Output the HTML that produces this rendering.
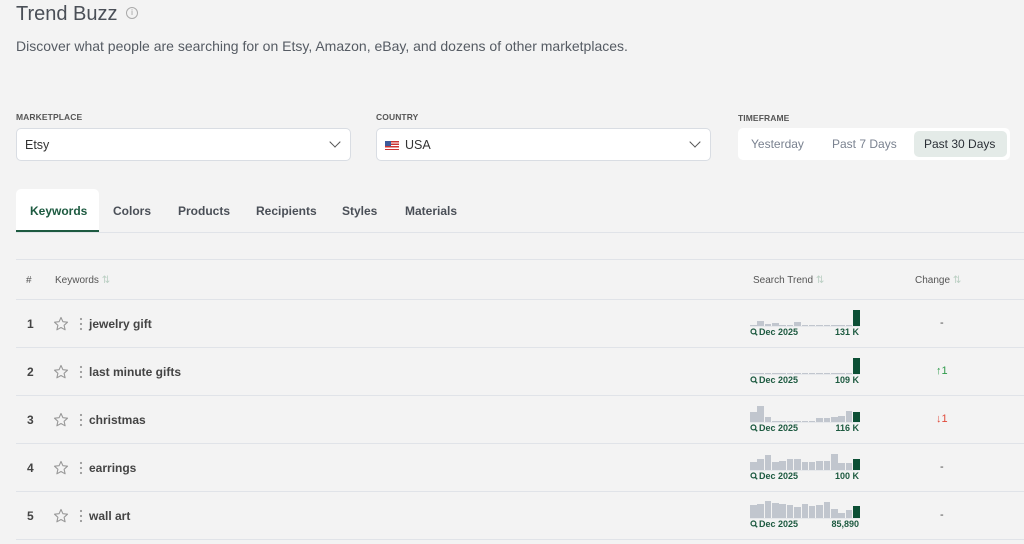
<!DOCTYPE html>
<html><head><style>
*{box-sizing:border-box;margin:0;padding:0}
body{width:1024px;height:544px;overflow:hidden;background:#f3f3f3;font-family:"Liberation Sans",sans-serif;color:#3a3f47;position:relative}
.abs{position:absolute}
h1{position:absolute;left:16px;top:3px;font-size:20px;font-weight:400;color:#4a4f57}
.info{position:absolute;left:126px;top:7px;width:12px;height:12px;border:1px solid #aaa;border-radius:50%;font-size:8px;color:#999;text-align:center;line-height:10px}
.sub{left:16px;top:38px;font-size:14px;color:#555b63}
.lbl{font-size:8.5px;font-weight:700;color:#555;letter-spacing:.1px}
.sel{background:#fff;border:1px solid #d9dde3;border-radius:5px;height:33px;top:128px;font-size:12.5px;padding:9px 8px;color:#333}
.chev{position:absolute;right:11px;width:8px;height:8px;border-right:1.5px solid #555;border-bottom:1.5px solid #555;transform:rotate(45deg);top:9px}
.tf{left:738px;top:128px;width:272px;height:32px;background:#fff;border-radius:5px;font-size:12px;color:#7a8290}
.tf span{position:absolute;top:9px}
.tabs{font-size:12px;font-weight:700;color:#4a4f57}
.line{position:absolute;left:16px;right:0;height:1px;background:#e0e3e8}
.row{position:absolute;left:16px;right:4px;height:48px;font-size:12px}
.num{position:absolute;left:11px;top:17px;font-weight:700;color:#444}
.star{position:absolute;left:37px;top:16px}
.dots{position:absolute;left:63px;top:16px}
.kw{position:absolute;left:73px;top:17px;font-weight:700;color:#444}
.spark{position:absolute;left:734px;top:9px;width:110px;height:18px;display:flex;align-items:flex-end;gap:0.8px;border-bottom:1px solid #e6e8eb}
.spark i{display:block;width:6.6px;background:#c1c6ce}
.spark i.d{background:#0c4f35;width:7px}
.dt{position:absolute;left:734px;top:27px;font-size:9px;font-weight:700;color:#1d5a40}
.dt svg{vertical-align:-1px;margin-right:1px}
.val{position:absolute;left:790px;width:53px;text-align:right;top:27px;font-size:9px;font-weight:700;color:#1d5a40}
.chg{position:absolute;left:920px;top:17px;font-size:11px}
</style></head><body>
<h1>Trend Buzz</h1><div class="info">i</div>
<div class="abs sub">Discover what people are searching for on Etsy, Amazon, eBay, and dozens of other marketplaces.</div>
<div class="abs lbl" style="left:16px;top:112px">MARKETPLACE</div>
<div class="abs lbl" style="left:376px;top:112px">COUNTRY</div>
<div class="abs lbl" style="left:738px;top:113px">TIMEFRAME</div>
<div class="abs sel" style="left:16px;width:335px">Etsy<span class="chev"></span></div>
<div class="abs sel" style="left:376px;width:335px"><span style="display:inline-block;width:14px;height:9px;background:repeating-linear-gradient(#c33 0 1.3px,#fff 1.3px 2.6px);position:relative;vertical-align:-1px;margin-right:6px"><span style="position:absolute;left:0;top:0;width:6px;height:5px;background:#3c5a9a"></span></span>USA<span class="chev"></span></div>
<div class="abs tf"><span style="left:13px">Yesterday</span><span style="left:94px">Past 7 Days</span>
<div style="position:absolute;left:176px;top:3px;width:93px;height:26px;background:#e4ebe8;border-radius:5px"></div><span style="left:186px;color:#2a2f36">Past 30 Days</span></div>
<div class="abs" style="left:16px;top:189px;width:83px;height:43px;background:#fff;border-radius:5px 5px 0 0;border-bottom:2px solid #1d5a40"></div>
<div class="abs tabs" style="top:204px;left:30px;color:#1d5a40">Keywords</div>
<div class="abs tabs" style="top:204px;left:113px">Colors</div>
<div class="abs tabs" style="top:204px;left:178px">Products</div>
<div class="abs tabs" style="top:204px;left:256px">Recipients</div>
<div class="abs tabs" style="top:204px;left:342px">Styles</div>
<div class="abs tabs" style="top:204px;left:405px">Materials</div>
<div class="line" style="top:232px"></div>
<div class="line" style="top:259px"></div>
<div class="abs" style="left:26px;top:275px;font-size:10px;color:#555">#</div>
<div class="abs" style="left:55px;top:275px;font-size:10px;color:#555">Keywords <span style="color:#bcd0c4">⇅</span></div>
<div class="abs" style="left:753px;top:275px;font-size:10px;color:#555">Search Trend <span style="color:#bcd0c4">⇅</span></div>
<div class="abs" style="left:915px;top:275px;font-size:10px;color:#555">Change <span style="color:#bcd0c4">⇅</span></div>
<div class="line" style="top:299px"></div>

<svg width="0" height="0" style="position:absolute"><defs>
<symbol id="st" viewBox="0 0 16 16"><path d="M8 1.5l1.9 4.2 4.6.5-3.4 3.1 1 4.5L8 11.5l-4.1 2.3 1-4.5-3.4-3.1 4.6-.5z" fill="none" stroke="#999" stroke-width="1.1" stroke-linejoin="round"/></symbol>
<symbol id="dt" viewBox="0 0 4 16"><circle cx="2" cy="3" r="1.1" fill="#999"/><circle cx="2" cy="8" r="1.1" fill="#999"/><circle cx="2" cy="13" r="1.1" fill="#999"/></symbol>
<symbol id="mg" viewBox="0 0 10 10"><circle cx="4.3" cy="4.3" r="3" fill="none" stroke="#1d5a40" stroke-width="1.6"/><path d="M6.5 6.5L9 9" stroke="#1d5a40" stroke-width="1.8"/></symbol>
</defs></svg>

<div class="row" style="top:300px"><span class="num">1</span><svg class="star" width="16" height="16"><use href="#st"/></svg><svg class="dots" width="4" height="16"><use href="#dt"/></svg><span class="kw">jewelry gift</span>
<div class="spark"><i style="height:1px"></i><i style="height:5px"></i><i style="height:2px"></i><i style="height:3px"></i><i style="height:1px"></i><i style="height:1px"></i><i style="height:4px"></i><i style="height:1px"></i><i style="height:1px"></i><i style="height:1px"></i><i style="height:1px"></i><i style="height:1px"></i><i style="height:1px"></i><i style="height:1px"></i><i class="d" style="height:16px"></i></div>
<span class="dt"><svg width="8" height="8"><use href="#mg"/></svg>Dec 2025</span><span class="val">131 K</span><span class="chg" style="color:#444;left:924px">-</span></div>
<div class="line" style="top:347px"></div>

<div class="row" style="top:348px"><span class="num">2</span><svg class="star" width="16" height="16"><use href="#st"/></svg><svg class="dots" width="4" height="16"><use href="#dt"/></svg><span class="kw">last minute gifts</span>
<div class="spark"><i style="height:1px"></i><i style="height:1px"></i><i style="height:1px"></i><i style="height:1px"></i><i style="height:1px"></i><i style="height:1px"></i><i style="height:1px"></i><i style="height:1px"></i><i style="height:1px"></i><i style="height:1px"></i><i style="height:1px"></i><i style="height:1px"></i><i style="height:1px"></i><i style="height:1px"></i><i class="d" style="height:16px"></i></div>
<span class="dt"><svg width="8" height="8"><use href="#mg"/></svg>Dec 2025</span><span class="val">109 K</span><span class="chg" style="color:#2e9a4a">↑1</span></div>
<div class="line" style="top:395px"></div>

<div class="row" style="top:396px"><span class="num">3</span><svg class="star" width="16" height="16"><use href="#st"/></svg><svg class="dots" width="4" height="16"><use href="#dt"/></svg><span class="kw">christmas</span>
<div class="spark"><i style="height:10px"></i><i style="height:16px"></i><i style="height:5px"></i><i style="height:1px"></i><i style="height:1px"></i><i style="height:1px"></i><i style="height:1px"></i><i style="height:1px"></i><i style="height:1px"></i><i style="height:4px"></i><i style="height:4px"></i><i style="height:5px"></i><i style="height:6px"></i><i style="height:11px"></i><i class="d" style="height:10px"></i></div>
<span class="dt"><svg width="8" height="8"><use href="#mg"/></svg>Dec 2025</span><span class="val">116 K</span><span class="chg" style="color:#e04a3a">↓1</span></div>
<div class="line" style="top:443px"></div>

<div class="row" style="top:444px"><span class="num">4</span><svg class="star" width="16" height="16"><use href="#st"/></svg><svg class="dots" width="4" height="16"><use href="#dt"/></svg><span class="kw">earrings</span>
<div class="spark"><i style="height:8px"></i><i style="height:11px"></i><i style="height:15px"></i><i style="height:8px"></i><i style="height:9px"></i><i style="height:11px"></i><i style="height:11px"></i><i style="height:8px"></i><i style="height:8px"></i><i style="height:9px"></i><i style="height:9px"></i><i style="height:16px"></i><i style="height:7px"></i><i style="height:7px"></i><i class="d" style="height:11px"></i></div>
<span class="dt"><svg width="8" height="8"><use href="#mg"/></svg>Dec 2025</span><span class="val">100 K</span><span class="chg" style="color:#444;left:924px">-</span></div>
<div class="line" style="top:491px"></div>

<div class="row" style="top:492px"><span class="num">5</span><svg class="star" width="16" height="16"><use href="#st"/></svg><svg class="dots" width="4" height="16"><use href="#dt"/></svg><span class="kw">wall art</span>
<div class="spark"><i style="height:13px"></i><i style="height:14px"></i><i style="height:17px"></i><i style="height:15px"></i><i style="height:14px"></i><i style="height:13px"></i><i style="height:11px"></i><i style="height:14px"></i><i style="height:12px"></i><i style="height:13px"></i><i style="height:16px"></i><i style="height:9px"></i><i style="height:5px"></i><i style="height:8px"></i><i class="d" style="height:12px"></i></div>
<span class="dt"><svg width="8" height="8"><use href="#mg"/></svg>Dec 2025</span><span class="val">85,890</span><span class="chg" style="color:#444;left:924px">-</span></div>
<div class="line" style="top:539px"></div>
</body></html>
